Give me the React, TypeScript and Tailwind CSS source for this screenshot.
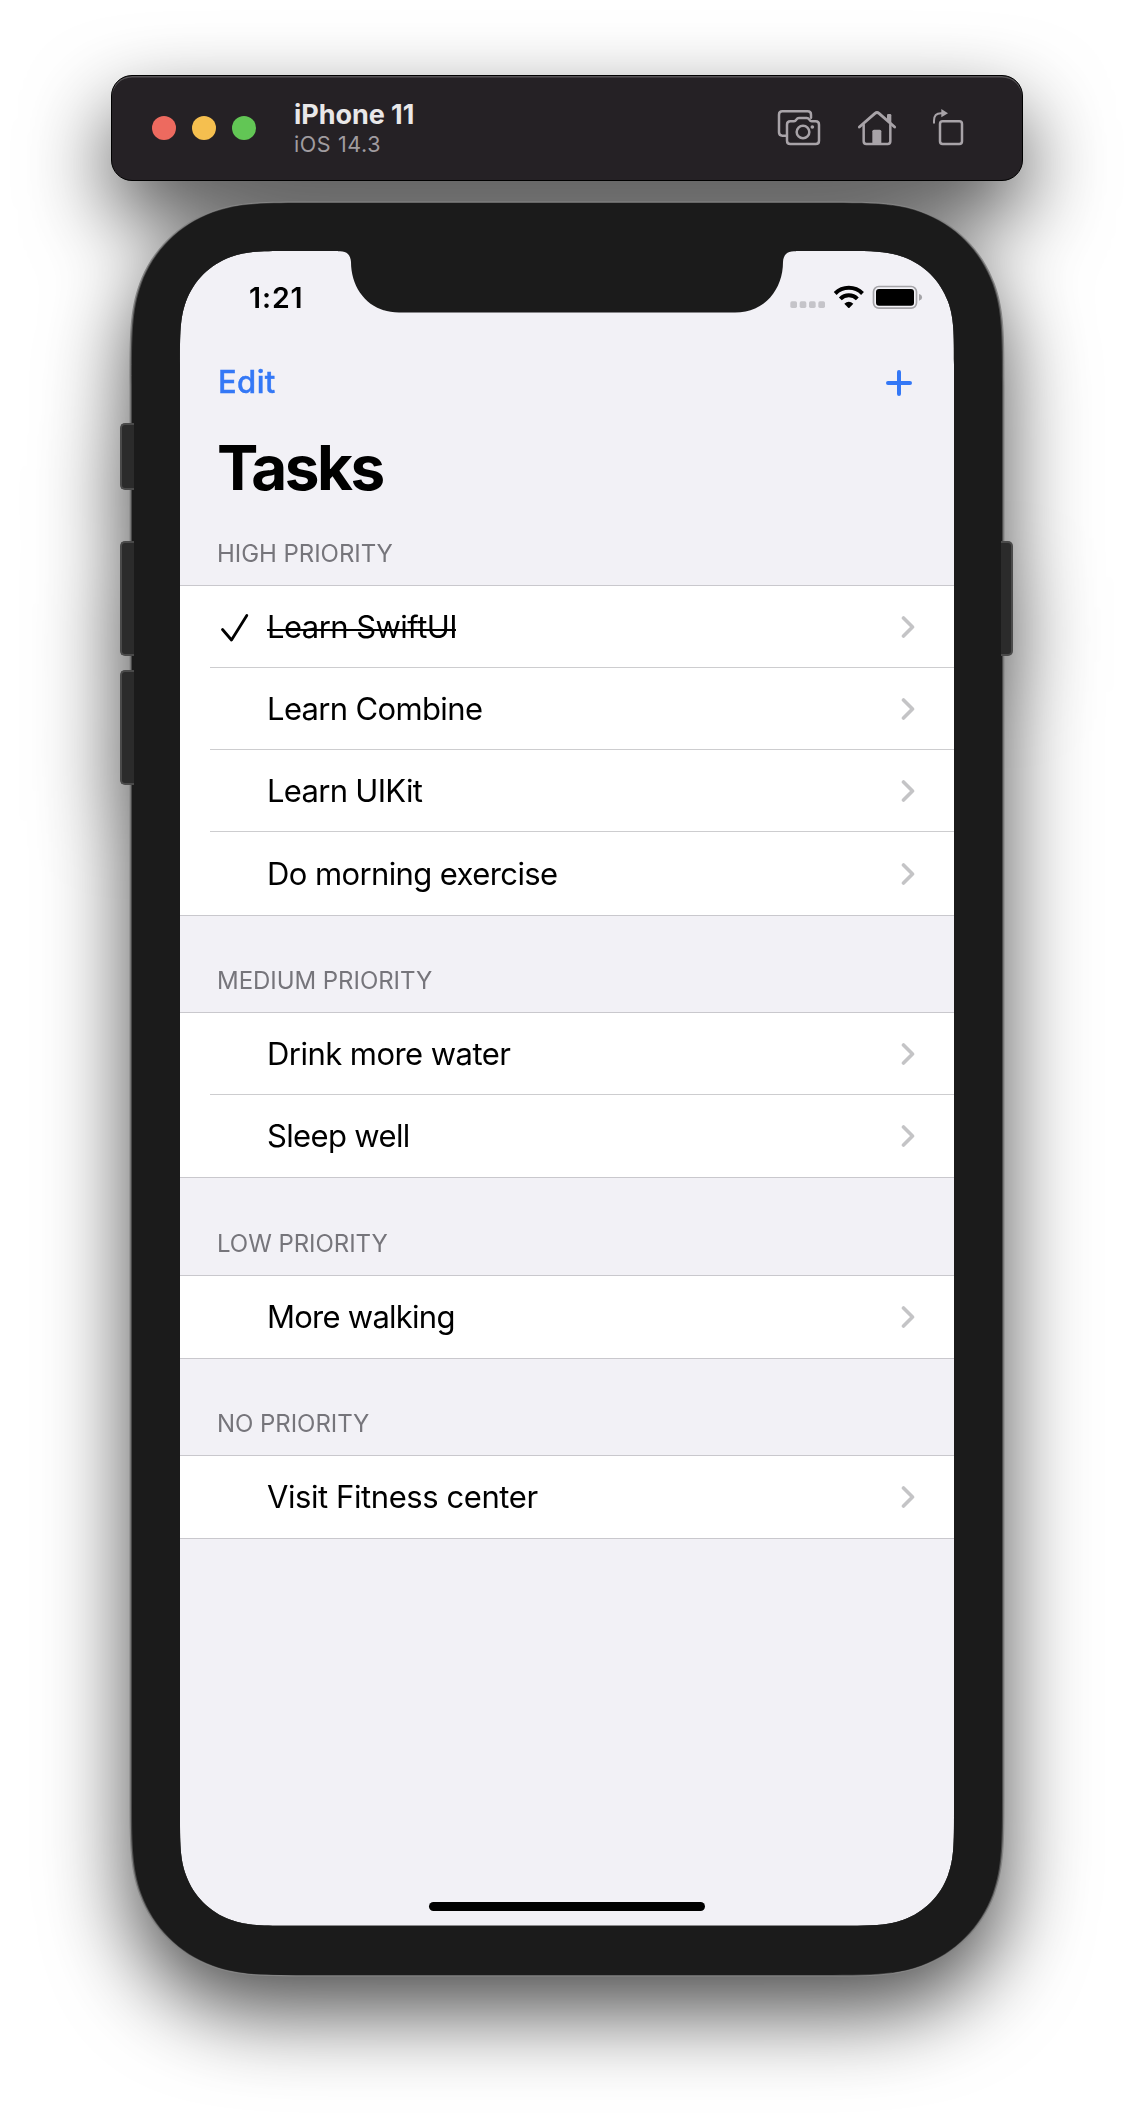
type Section = { title: string; head: string; body: string; tasks: { name: string; done?: boolean; tracking: string }[] };

const sections: Section[] = [
  {
    title: "HIGH PRIORITY",
    head: "h-[69px]",
    body: "h-[331px]",
    tasks: [
      { name: "Learn SwiftUI", done: true, tracking: "tracking-[-0.55px]" },
      { name: "Learn Combine", tracking: "tracking-[-0.65px]" },
      { name: "Learn UIKit", tracking: "tracking-[-0.7px]" },
      { name: "Do morning exercise", tracking: "tracking-[-0.6px]" },
    ],
  },
  {
    title: "MEDIUM PRIORITY",
    head: "h-[96px]",
    body: "h-[166px]",
    tasks: [
      { name: "Drink more water", tracking: "tracking-[-0.55px]" },
      { name: "Sleep well", tracking: "tracking-[-0.65px]" },
    ],
  },
  { title: "LOW PRIORITY", head: "h-[97px]", body: "h-[84px]", tasks: [{ name: "More walking", tracking: "tracking-[-0.75px]" }] },
  { title: "NO PRIORITY", head: "h-[96px]", body: "h-[84px]", tasks: [{ name: "Visit Fitness center", tracking: "tracking-[-0.42px]" }] },
];

// Rounded rectangle with continuous-curvature corners.
function squircle(x: number, y: number, w: number, h: number, r: number) {
  const corner = (cx: number, cy: number, ux: number, uy: number, vx: number, vy: number) => {
    // u points from the corner back along the incoming edge, v along the outgoing edge
    const p = (a: number, b: number) => `${(cx + ux * a * r + vx * b * r).toFixed(2)} ${(cy + uy * a * r + vy * b * r).toFixed(2)}`;
    return (
      `L${p(1.42, 0)}C${p(1.03, 0)} ${p(0.838, 0)} ${p(0.63149, 0.07491)}` +
      `C${p(0.37282, 0.16906)} ${p(0.16906, 0.37282)} ${p(0.07491, 0.63149)}` +
      `C${p(0, 0.838)} ${p(0, 1.03)} ${p(0, 1.42)}`
    );
  };
  return (
    `M${x + w / 2} ${y}` +
    corner(x + w, y, -1, 0, 0, 1) +
    corner(x + w, y + h, 0, -1, -1, 0) +
    corner(x, y + h, 1, 0, 0, -1) +
    corner(x, y, 0, 1, 1, 0) +
    "Z"
  );
}

const OUTER = squircle(0.5, 0.5, 875, 1775, 130);
const BODY = squircle(3, 2, 870, 1772, 128);
const HOLE = squircle(51, 50, 774, 1674.7, 80);
const NOTCH =
  "M209 49V50.2H211C218 50.2 221.6 54 222 61C222 88 240 111.5 270 111.5H606C636 111.5 654 88 654 61C654.4 54 658 50.2 665 50.2H667V49Z";

function Bezel() {
  return (
    <svg className="pointer-events-none absolute inset-0" width="876" height="1776" viewBox="0 0 876 1776">
      <path d={OUTER + HOLE} fillRule="evenodd" fill="#858585" />
      <path d={squircle(1.8, 1.5, 872.4, 1773, 129) + HOLE} fillRule="evenodd" fill="#4a4a4a" />
      <path d={BODY + HOLE} fillRule="evenodd" fill="#1b1b1b" />
      <path d={NOTCH} fill="#1b1b1b" />
    </svg>
  );
}

function SideButton({ className }: { className: string }) {
  return <div className={"absolute border-y-2 border-[#4a4a4a] bg-[#2b2b2b] " + className} />;
}

function Toolbar() {
  return (
    <header className="flex h-[106px] w-[912px] items-center rounded-[21px] border border-black bg-[#252125] pl-10 pr-[57px] shadow-[inset_0_1.5px_0_#565356]">
      <div className="flex gap-4">
        <span className="size-6 rounded-full bg-[#ed6a5f]" />
        <span className="size-6 rounded-full bg-[#f5bf4f]" />
        <span className="size-6 rounded-full bg-[#62c655]" />
      </div>
      <div className="mt-0.5 ml-[38px] flex-1 whitespace-nowrap">
        <div className="h-[30px] text-[27px] leading-[30px] font-bold tracking-[-0.05px] text-[#e9e8e9]">iPhone 11</div>
        <div className="h-7 text-[21.5px] leading-7 tracking-[0.6px] text-[#a09ca0]">iOS 14.3</div>
      </div>
      <div className="-mt-0.5 flex text-[#a8a3a8]">
        <svg width="44" height="38" viewBox="111 144 132 114" fill="none" stroke="currentColor" strokeWidth="7.5" strokeLinejoin="round" strokeLinecap="round">
          <path d="M138 227H127Q117 227 117 217V164Q117 154 127 154H203Q213 154 213 164V173" />
          <path d="M151 184H162Q166 184 169 179Q172 174 177 174H200Q205 174 208 179Q211 184 215 184H227Q237 184 237 194V242Q237 252 227 252H151Q141 252 141 242V194Q141 184 151 184Z" />
          <circle cx="189" cy="216" r="19" />
          <circle cx="217" cy="201" r="5.5" fill="currentColor" stroke="none" />
        </svg>
        <svg className="ml-9" width="40" height="38" viewBox="351 144 120 114" fill="none" stroke="currentColor" strokeWidth="7.5" strokeLinejoin="round" strokeLinecap="round">
          <path d="M358 201L405 160Q411 155 417 160L464 201" strokeWidth="8.5" />
          <path d="M371 194V244Q371 252 379 252H443Q451 252 451 244V194" />
          <path d="M441 178V166Q441 162 445 162H450Q454 162 454 166V191L441 180Z" fill="currentColor" stroke="none" />
          <path d="M397 252V214Q397 209 402 209H419Q424 209 424 214V252Z" fill="currentColor" stroke="none" />
        </svg>
        <svg className="ml-[34px]" width="34" height="38" viewBox="573 144 102 114" fill="none" stroke="currentColor" strokeWidth="7.5" strokeLinecap="round">
          <rect x="600" y="184" width="66" height="68" rx="8" />
          <path d="M582 188V182Q582 160 603 160H606" strokeWidth="6" />
          <path d="M604 147L624 159.500L604 172Z" fill="currentColor" stroke="none" />
        </svg>
      </div>
    </header>
  );
}

function StatusBar() {
  return (
    <div className="flex h-[94px] items-center justify-between pr-[31px] pl-[69px]">
      <span className="text-[28.5px] leading-none font-semibold tracking-[0.9px]">1:21</span>
      <svg className="-mt-0.5" width="133" height="26" viewBox="150 672 399 78">
        <g fill="#c5c4c9">
          <rect x="151" y="724" width="20" height="20" rx="5" />
          <rect x="179" y="724" width="20" height="20" rx="5" />
          <rect x="207" y="724" width="20" height="20" rx="5" />
          <rect x="235" y="724" width="20" height="20" rx="5" />
        </g>
        <g fill="none" stroke="#000">
          <path d="M285.500 700.500A58 58 0 0 1 367.500 700.500" strokeWidth="12" />
          <path d="M301 716.500A36 36 0 0 1 352 716.500" strokeWidth="12" />
        </g>
        <path d="M313 731Q326.500 720 340 731L328.500 743Q326.500 745 324.500 743Z" />
        <rect x="400.500" y="679.500" width="129" height="65" rx="16" fill="none" stroke="#a5a4a8" strokeWidth="5" />
        <rect x="408" y="687" width="114" height="50" rx="9" />
        <path d="M537 702Q546 704 546 712Q546 720 537 722Z" fill="#a5a4a8" />
      </svg>
    </div>
  );
}

function Row({ name, done, tracking, last }: { name: string; done?: boolean; tracking: string; last: boolean }) {
  return (
    <li className={last ? "flex-1 pl-[30px]" : "h-[82px] pl-[30px]"}>
      <div className={"flex h-full items-center pr-[39px]" + (last ? "" : " border-b border-[#cdcdcf]")}>
        <div className="w-[57px]">
          {done && (
            <svg className="mt-0.5 ml-2.5" width="30" height="30" viewBox="0 0 30 30" fill="none" stroke="#000" strokeWidth="2.8" strokeLinecap="round" strokeLinejoin="round">
              <path d="M2.500 16.500L11.500 27L26.800 2.500" />
            </svg>
          )}
        </div>
        <span className={"relative flex-1 text-[31px] leading-[40px] whitespace-nowrap " + tracking}>
          {name}
          {done && <span className="absolute top-[22px] left-0 h-[2px] w-[189px] bg-black" />}
        </span>
        <svg width="14" height="24" viewBox="0 0 14 24" fill="none" stroke="#c4c4c6" strokeWidth="3.6" strokeLinecap="round" strokeLinejoin="round">
          <path d="M2.500 3L11.500 12L2.500 21" />
        </svg>
      </div>
    </li>
  );
}

export default function App() {
  return (
    <main className="h-[2126px] w-[1134px] overflow-hidden bg-white pt-[75px] font-['Inter',sans-serif] text-black">
      <div className="flex flex-col items-center gap-5 drop-shadow-[0_36px_42px_rgba(0,0,0,0.69)]">
        <Toolbar />
        <div className="relative h-[1776px] w-[876px] px-[51px] pt-[50px]">
          <div className="flex h-[1675px] flex-col overflow-hidden rounded-[70px] bg-[#f2f1f6]">
            <StatusBar />
            <nav className="flex h-[74px] items-center justify-between pr-[41px] pl-[38px] text-[#3478f6]">
              <span className="-mt-0.5 text-[31px] leading-none font-medium tracking-[0.4px] [-webkit-text-stroke:0.4px_#3478f6]">Edit</span>
              <svg width="28" height="28" viewBox="0 0 28 28" stroke="currentColor" strokeWidth="4" strokeLinecap="round">
                <path d="M14 4V26M3 15H25" />
              </svg>
            </nav>
            <h1 className="flex h-[97px] items-center pl-[37px] text-[62px] leading-none font-bold tracking-[-2.5px]">Tasks</h1>
            {sections.map((s) => (
              <section key={s.title}>
                <h2 className={"flex items-end pb-[19px] pl-[37px] text-[24px] leading-none tracking-[-0.05px] text-[#76757b] " + s.head}>{s.title}</h2>
                <ul className={"flex flex-col border-y border-[#c9c8cd] bg-white " + s.body}>
                  {s.tasks.map((t, i) => (
                    <Row key={t.name} {...t} last={i === s.tasks.length - 1} />
                  ))}
                </ul>
              </section>
            ))}
            <div className="mt-auto mb-[15px] h-[9px] w-[276px] self-center rounded-full bg-black" />
          </div>
          <Bezel />
          <SideButton className="top-[222px] left-[-9px] h-[67px] w-[14px] rounded-l-[5px] border-l-2" />
          <SideButton className="top-[340px] left-[-9px] h-[115px] w-[14px] rounded-l-[5px] border-l-2" />
          <SideButton className="top-[469px] left-[-9px] h-[115px] w-[14px] rounded-l-[5px] border-l-2" />
          <SideButton className="top-[340px] right-[-8px] h-[115px] w-[12px] rounded-r-[5px] border-r-2" />
        </div>
      </div>
    </main>
  );
}
